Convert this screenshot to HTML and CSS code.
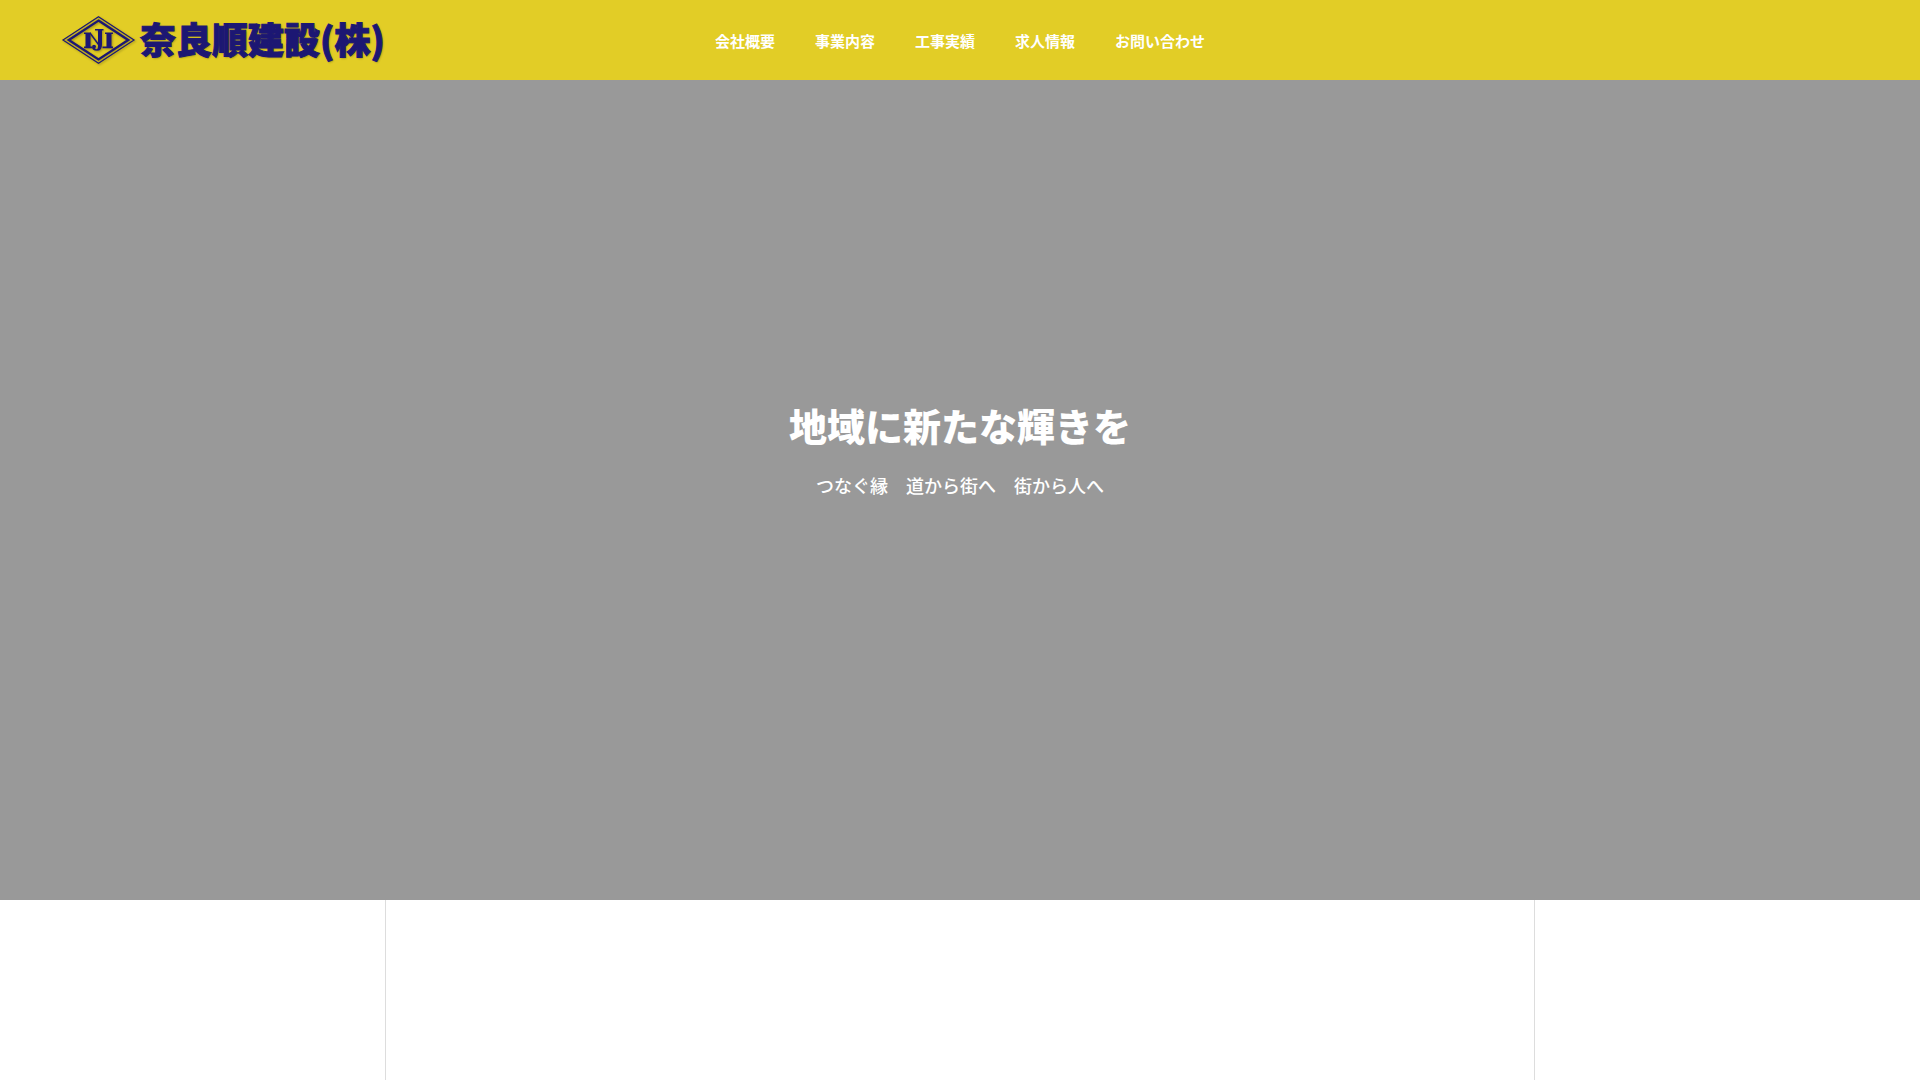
FILE: index.html
```html
<!DOCTYPE html>
<html lang="ja">

  <head>

    <meta charset="UTF-8">
    <meta name="viewport" content="width=device-width, initial-scale=1">

    <title>奈良順建設(株)</title>

    <link rel="stylesheet" href="styles.css">

  </head>

  <body>

    <header class="header">
      <a class="logo" href="#">
        <svg class="logo-mark" viewBox="0 0 76 50" aria-hidden="true">
          <g fill="none" stroke="#1c1773">
            <path d="M38.500 1.800 L74 25 L38.500 48.200 L3 25 Z" stroke-width="1.2"/>
            <path d="M38.500 5.600 L68.200 25 L38.500 44.400 L8.800 25 Z" stroke-width="2.4"/>
            <path d="M30 18 L38.500 29.500" stroke-width="1.4"/>
          </g>
          <g fill="#1c1773">
            <path d="M24 17.500 H31 V19 H30.500 V31.500 H32 V33.200 H24 V31.500 H25.500 V19 H24 Z"/>
            <path d="M35 14 H43.500 V15.500 H42 V29.500 Q42 35.800 37 35.800 Q32 35.800 32 32 Q32 29.800 34 29.800 Q36 29.800 36 31.500 Q36 32.500 35 33 Q35.500 34.200 36.500 34.200 Q38 34.200 38 30.500 V15.500 H35 Z"/>
            <path d="M45 17.500 H53 V19 H51.500 V31.500 H53 V33.200 H42.500 V31.500 H46.500 V19 H45 Z"/>
          </g>
        </svg>
        <span class="logo-name">奈良順建設(株)</span>
      </a>
      <nav class="nav">
        <ul>
          <li><a href="#company">会社概要</a></li>
          <li><a href="#business">事業内容</a></li>
          <li><a href="#works">工事実績</a></li>
          <li><a href="#recruit">求人情報</a></li>
          <li><a href="#contact">お問い合わせ</a></li>
        </ul>
      </nav>
    </header>

    <main>
      <section class="hero">
        <h1>地域に新たな輝きを</h1>
        <p>つなぐ縁　道から街へ　街から人へ</p>
      </section>
      <div class="content" id="company"></div>
    </main>

  </body>

</html>
```

FILE: styles.css
```css
*
{
  box-sizing:border-box
}
body
{
  margin:0;
  background-color:white;
  color:white;
  font-family:"Noto Sans CJK JP", sans-serif
}
a
{
  color:inherit;
  text-decoration:none
}
.header
{
  position:fixed;
  top:0;
  left:0;
  right:0;
  z-index:10;
  display:grid;
  grid-template-columns:1fr auto 1fr;
  align-items:center;
  height:80px;
  padding:0 60px;
  background-color:#e2cd26
}
.logo
{
  display:flex;
  align-items:center;
  gap:4px;
  justify-self:start;
  color:#1c1773
}
.logo-mark
{
  width:76px;
  height:50px;
  filter:drop-shadow(1px 1px 1px rgba(0, 0, 0, 0.3))
}
.logo-name
{
  padding-bottom:4px;
  font-size:36px;
  font-weight:900;
  line-height:48px;
  white-space:nowrap;
  -webkit-text-stroke:1px #1c1773;
  text-shadow:1px 1px 2px rgba(0, 0, 0, 0.3)
}
.nav ul
{
  display:flex;
  gap:40px;
  margin:0;
  padding:0;
  list-style:none
}
.nav a
{
  font-size:15px;
  font-weight:bold;
  line-height:24px;
  white-space:nowrap
}
.nav a:hover
{
  opacity:0.7
}
.hero
{
  display:flex;
  flex-direction:column;
  align-items:center;
  justify-content:center;
  gap:18px;
  min-height:900px;
  padding-bottom:4px;
  background-color:#999999;
  text-align:center
}
.hero h1
{
  margin:0;
  font-size:38px;
  font-weight:900;
  line-height:56px
}
.hero p
{
  margin:0;
  font-size:18px;
  font-weight:500;
  line-height:28px
}
.content
{
  max-width:1150px;
  min-height:180px;
  margin:0 auto;
  border:solid #dddddd;
  border-width:0 1px
}
```
